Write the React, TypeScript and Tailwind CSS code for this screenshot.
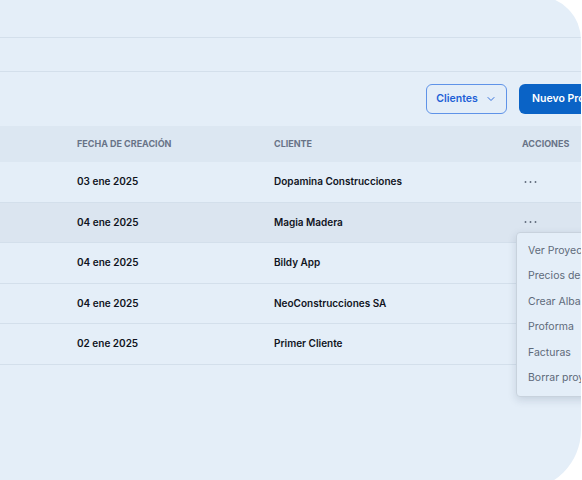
import { ChevronDown } from 'lucide-react'

const rows = [
  { date: '03 ene 2025', client: 'Dopamina Construcciones' },
  { date: '04 ene 2025', client: 'Magia Madera', active: true },
  { date: '04 ene 2025', client: 'Bildy App' },
  { date: '04 ene 2025', client: 'NeoConstrucciones SA' },
  { date: '02 ene 2025', client: 'Primer Cliente' },
]

const menuItems = ['Ver Proyecto', 'Precios de Obra', 'Crear Albarán', 'Proforma', 'Facturas', 'Borrar proyecto']

function Dots() {
  return (
    <svg width="13" height="4" viewBox="0 0 13 4" className="text-[#5f697a]">
      <circle cx="1.5" cy="2" r="0.95" fill="currentColor" />
      <circle cx="6.5" cy="2" r="0.95" fill="currentColor" />
      <circle cx="11.5" cy="2" r="0.95" fill="currentColor" />
    </svg>
  )
}

export default function App() {
  return (
    <div className="h-[480px] w-[582px] overflow-hidden bg-white font-['Inter',sans-serif]">
      <div className="relative -mt-[4px] h-[494px] w-[581px] overflow-hidden rounded-tr-[44px] rounded-br-[60px] bg-[#e4eef8] pt-[4px]">
        {/* top bands */}
        <div className="h-[38px] border-b border-[#d3dfeb]" />
        <div className="h-[34px] border-b border-[#d3dfeb]" />

        {/* toolbar */}
        <div className="flex h-[54px] items-center gap-3 pl-[426px]">
          <button className="flex h-[30px] w-[81px] shrink-0 items-center justify-center gap-[7px] rounded-md border border-[#5f93e8] text-[10.5px] font-semibold text-[#1d5fd6]">
            Clientes
            <ChevronDown size={12} strokeWidth={1.75} />
          </button>
          <button className="h-[30px] w-[110px] shrink-0 rounded-md bg-[#0a63c6] pl-[13px] text-left text-[10.5px] font-semibold whitespace-nowrap text-white">
            Nuevo Proyecto
          </button>
        </div>

        {/* table */}
        <div className="grid h-[36px] grid-cols-[197px_248px_1fr] items-center bg-[#dce7f2] pl-[77px] text-[9px] font-bold text-[#687387] uppercase">
          <div>Fecha de creación</div>
          <div>Cliente</div>
          <div>Acciones</div>
        </div>
        {rows.map((r) => (
          <div
            key={r.client}
            className={`grid h-[40.5px] grid-cols-[197px_248px_1fr] items-center border-b border-[#d3dfeb] pl-[77px] text-[10px] font-semibold text-[#10141d] ${
              r.active ? 'bg-[#dbe5f0]' : ''
            }`}
          >
            <div>{r.date}</div>
            <div>{r.client}</div>
            <div className="pl-[2px]">
              <Dots />
            </div>
          </div>
        ))}

        {/* dropdown menu */}
        <div className="absolute top-[236px] left-[516px] w-[120px] rounded-[4px] border border-[#c8d2dd] bg-[#e4eef8] py-[5px] shadow-[0_3px_8px_rgba(30,50,80,0.15)]">
          {menuItems.map((m) => (
            <div key={m} className="flex h-[25.5px] items-center pl-[11px] text-[10.5px] whitespace-nowrap text-[#5e6a7a]">
              {m}
            </div>
          ))}
        </div>
      </div>
    </div>
  )
}
